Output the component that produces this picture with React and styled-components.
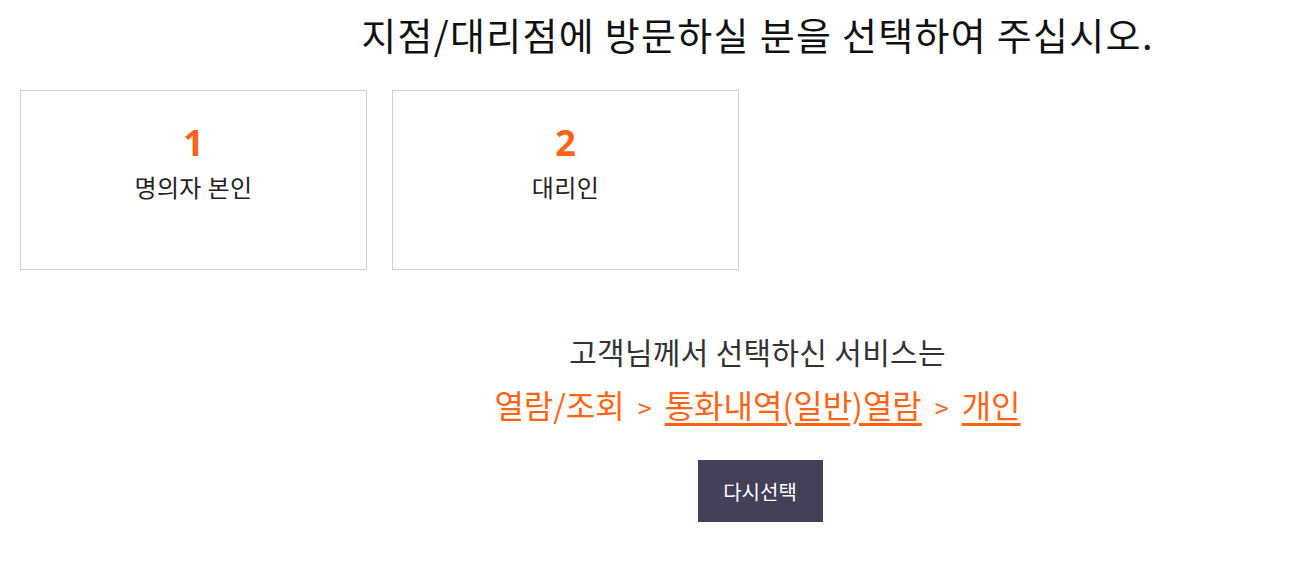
import React from 'react';
import styled, { createGlobalStyle } from 'styled-components';

const GlobalStyle = createGlobalStyle`
  body {
    margin: 0;
    background: #fff;
    font-family: "Noto Sans CJK KR", "Noto Sans", sans-serif;
  }
`;

const Page = styled('div')`
  width: 1293px;
  padding-bottom: 40px;
`;

const Centered = styled('div')`
  margin-left: 222px;
  text-align: center;
`;

const Title = styled('h1')`
  margin: 0;
  padding-top: 9px;
  font-size: 38px;
  font-weight: 400;
  line-height: 50px;
  color: #111;
  letter-spacing: 1.3px;
`;

const CardRow = styled('div')`
  display: flex;
  gap: 25px;
  margin: 31px 0 0 20px;
`;

const Card = styled('div')`
  box-sizing: border-box;
  width: 347px;
  height: 180px;
  border: 1px solid #cfcfcf;
  display: flex;
  flex-direction: column;
  align-items: center;
  padding-top: 28px;
  cursor: pointer;
`;

const Num = styled('div')`
  font-family: "Open Sans", "Noto Sans", sans-serif;
  font-size: 36px;
  font-weight: 700;
  line-height: 48px;
  color: #ff6414;
`;

const Label = styled('div')`
  margin-top: 3px;
  font-size: 24px;
  line-height: 34px;
  color: #222;
  letter-spacing: 0.4px;
`;

const Intro = styled('p')`
  margin: 60px 0 0;
  font-size: 30px;
  line-height: 42px;
  color: #333;
  letter-spacing: 0.3px;
`;

const Path = styled('p')`
  margin: 8px 0 0;
  font-size: 32px;
  line-height: 48px;
  color: #ff6414;
`;

const Link = styled('span')`
  text-decoration: ${(p) => (p.$under ? 'underline' : 'none')};
  text-underline-offset: 5px;
  text-decoration-thickness: 3px;
`;

const Sep = styled('span')`
  margin: 0 13px;
  font-size: 25px;
`;

const Button = styled('button')`
  margin: 29px 0 0 5px;
  width: 125px;
  height: 62px;
  border: 0;
  background: #44405a;
  color: #fff;
  font-family: inherit;
  font-size: 20px;
  cursor: pointer;
`;

function App() {
  const choices = [
    { num: 1, label: '명의자 본인' },
    { num: 2, label: '대리인' },
  ];

  return (
    <Page>
      <GlobalStyle />
      <Centered>
        <Title>지점/대리점에 방문하실 분을 선택하여 주십시오.</Title>
      </Centered>
      <CardRow>
        {choices.map((c) => (
          <Card key={c.num}>
            <Num>{c.num}</Num>
            <Label>{c.label}</Label>
          </Card>
        ))}
      </CardRow>
      <Centered>
        <Intro>고객님께서 선택하신 서비스는</Intro>
        <Path>
          <Link>열람/조회</Link>
          <Sep>&gt;</Sep>
          <Link $under>통화내역(일반)열람</Link>
          <Sep>&gt;</Sep>
          <Link $under>개인</Link>
        </Path>
        <Button>다시선택</Button>
      </Centered>
    </Page>
  );
}

export default App;
